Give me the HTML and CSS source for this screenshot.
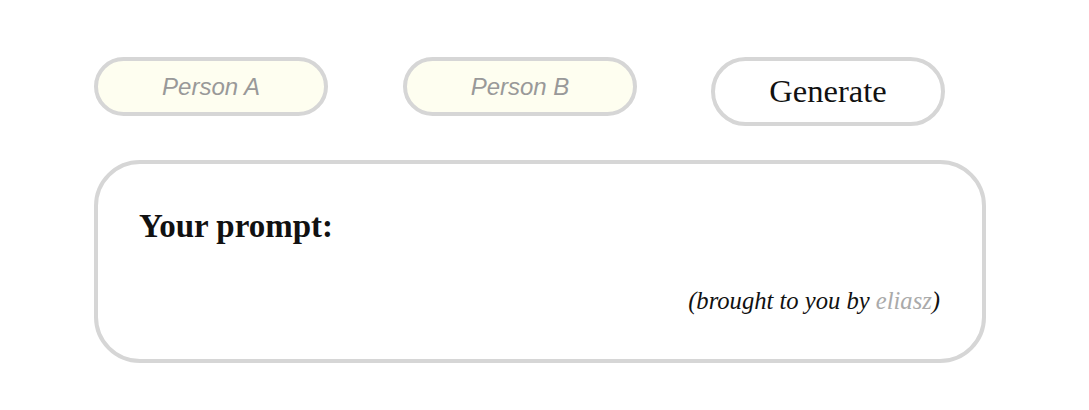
FILE: index.html
```html
<!DOCTYPE html>
<html>
<head>
<meta charset="utf-8">
<link rel="stylesheet" href="styles.css">
</head>
<body>
<div class="page">
  <div class="controls">
    <input class="person" type="text" placeholder="Person A">
    <input class="person" type="text" placeholder="Person B">
    <button class="generate">Generate</button>
  </div>
  <div class="result">
    <h2 class="prompt-title">Your prompt:</h2>
    <p class="credit">(brought to you by <a class="author" href="#">eliasz</a>)</p>
  </div>
</div>
</body>
</html>
```
FILE: styles.css
```css
html, body {
  margin: 0;
  padding: 0;
  background: #ffffff;
}
.page {
  padding: 57px 0 0 94px;
  width: 892px;
  font-family: "Liberation Serif", "Times New Roman", serif;
}
.controls {
  display: flex;
  align-items: flex-start;
  gap: 75px;
}
.person {
  box-sizing: border-box;
  width: 234px;
  height: 59px;
  border: 4px solid #d6d6d6;
  border-radius: 30px;
  background: #fefef0;
  font-family: "Liberation Sans", Arial, sans-serif;
  font-style: italic;
  font-size: 24px;
  text-align: center;
  color: #999;
  padding: 0 0 0 0;
  outline: none;
}
.person::placeholder {
  color: #999;
  opacity: 1;
}
.generate {
  box-sizing: border-box;
  width: 234px;
  height: 69px;
  border: 4px solid #d6d6d6;
  border-radius: 35px;
  background: #ffffff;
  font-family: "Liberation Serif", "Times New Roman", serif;
  font-size: 32.5px;
  color: #111;
  padding: 0;
  margin-left: -1px;
}
.result {
  box-sizing: border-box;
  margin-top: 34px;
  width: 892px;
  height: 203px;
  border: 4px solid #d6d6d6;
  border-radius: 46px;
  padding: 42px 42px 0 41px;
  display: flex;
  flex-direction: column;
}
.prompt-title {
  margin: 0;
  font-size: 33px;
  font-weight: bold;
  line-height: 40px;
  color: #111;
}
.credit {
  margin: 41px 0 0 0;
  text-align: right;
  font-style: italic;
  font-size: 24.6px;
  line-height: 28px;
  color: #111;
}
.author {
  color: #aaa;
  text-decoration: none;
}
```
